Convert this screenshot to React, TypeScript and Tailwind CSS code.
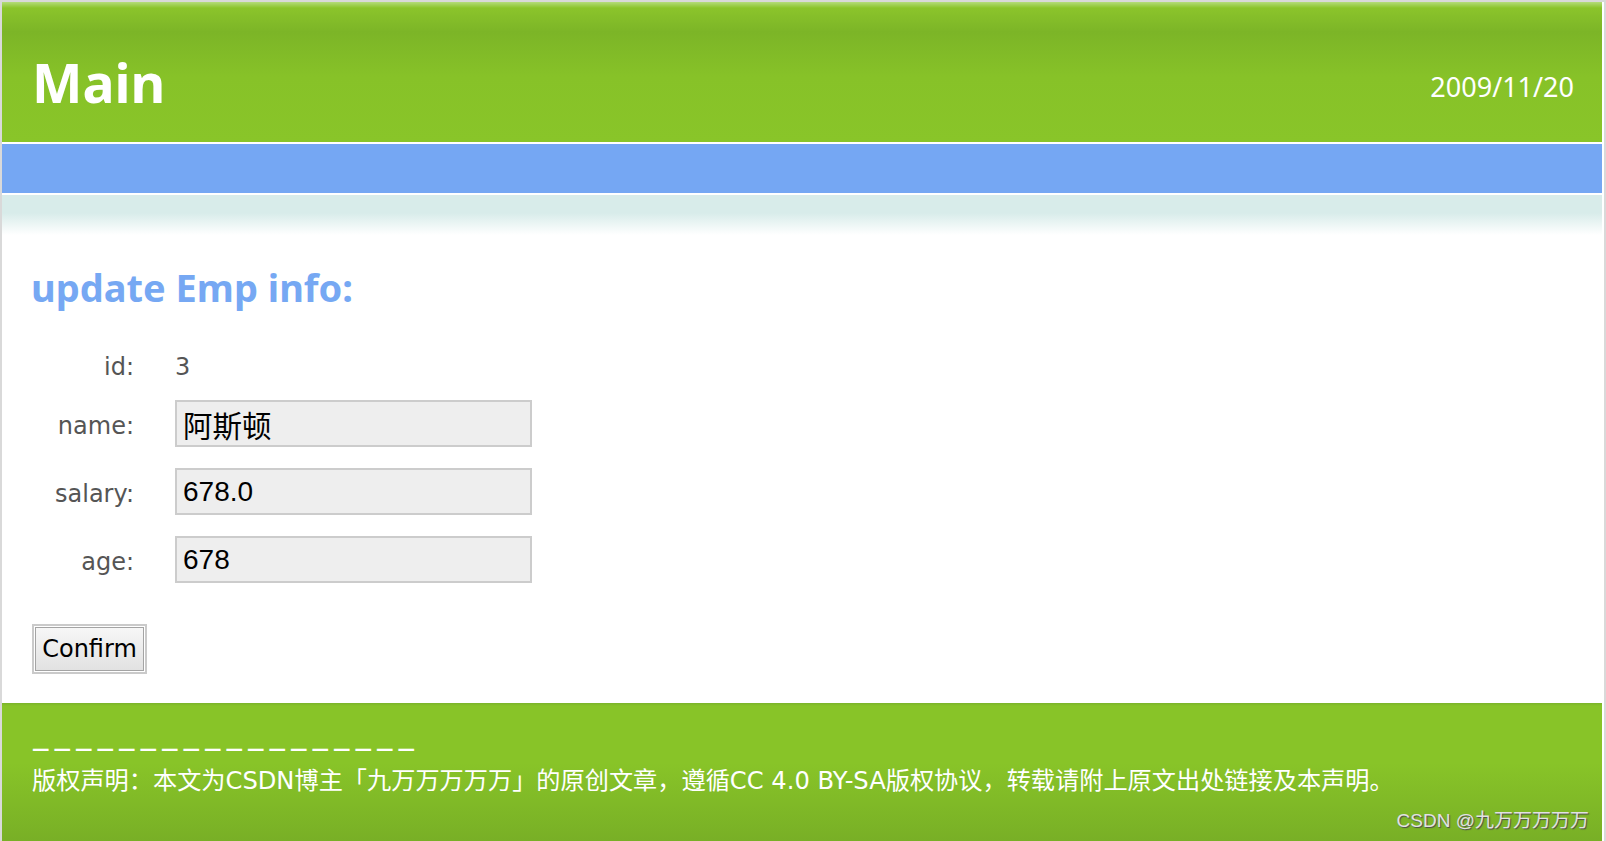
export default function App() {
  const rows = [
    { label: 'name:', value: '阿斯顿', size: 'text-[29.5px]' },
    { label: 'salary:', value: '678.0', size: 'text-[28px]' },
    { label: 'age:', value: '678', size: 'text-[28px]' },
  ];

  return (
    <div className="h-[841px] w-[1606px] overflow-hidden border-l-2 border-r-2 border-t-2 border-[#d9d9d9] bg-white pr-[2px]">
      <div className="flex w-[1600px] flex-col">
        {/* header */}
        <div className="flex h-[140px] items-start justify-between bg-[linear-gradient(to_bottom,#b4dc7a_0px,#8bc42b_6px,#7cb527_30px,#87c228_75px,#89c529_100%)] pl-[30px] pr-[28px]">
          <h1 className="mt-[54px] font-['Noto_Sans',sans-serif] text-[53.5px] font-bold leading-[53px] text-white">
            Main
          </h1>
          <span className="mt-[71px] font-['Noto_Sans',sans-serif] text-[27px] leading-[27px] text-white">
            2009/11/20
          </span>
        </div>
        <div className="h-[2px] bg-white" />
        <div className="h-[49px] bg-[#75a7f3]" />
        <div className="h-[2px] bg-white" />
        <div className="h-[40px] bg-[linear-gradient(to_bottom,#d8ecea_0px,#d8ecea_18px,#ffffff_40px)]" />

        {/* content */}
        <div className="flex flex-col pb-[29px] pl-[29px] pt-[30px]">
          <h2 className="font-['Noto_Sans',sans-serif] text-[38px] font-bold leading-[44px] text-[#76a8f3]">
            update Emp info:
          </h2>

          <div className="mt-[46px] grid w-fit grid-cols-[103px_auto] items-center gap-x-[41px] gap-y-[21px] font-['DejaVu_Sans',sans-serif] text-[24px] text-[#555555]">
            <span className="text-right leading-[24px]">id:</span>
            <span className="leading-[24px]">3</span>
            {rows.map((r) => (
              <div key={r.label} className="contents">
                <span className="pt-[4px] text-right leading-[24px]">{r.label}</span>
                <input
                  readOnly
                  value={r.value}
                  className={`h-[47px] w-[357px] border-2 border-[#cccccc] bg-[#eeeeee] px-[6px] font-['Liberation_Sans','Noto_Sans_CJK_SC',sans-serif] text-black outline-none ${r.size}`}
                />
              </div>
            ))}
          </div>

          <button className="ml-px mt-[41px] block h-[50px] w-[115px] border-2 border-[#cacaca] bg-white p-px">
            <span className="flex h-full w-full items-center justify-center border border-[#a4a4a4] bg-[linear-gradient(to_bottom,#f7f7f7,#e2e2e2)] font-['DejaVu_Sans',sans-serif] text-[24px] leading-none text-black">
              Confirm
            </span>
          </button>
        </div>

        {/* footer */}
        <div className="flex h-[200px] flex-col bg-[linear-gradient(to_bottom,#7bb32a_0px,#88c428_3px,#88c428_60px,#78af26_139px)] pl-[30px] pr-[13px] pt-[34px] text-white">
          <div className="font-['DejaVu_Sans',sans-serif] text-[17.5px] font-bold leading-[24px] tracking-[4px]">
            ——————————————————
          </div>
          <p className="mt-[4px] font-['DejaVu_Sans','Noto_Sans_CJK_SC',sans-serif] text-[24.2px] leading-[32px]">
            版权声明：本文为CSDN博主「九万万万万万」的原创文章，遵循CC 4.0 BY-SA版权协议，转载请附上原文出处链接及本声明。
          </p>
          <p className="mt-[12px] text-right font-['Liberation_Sans','Noto_Sans_CJK_SC',sans-serif] text-[19px] leading-[24px] text-[#e2e2e2] [text-shadow:1px_1px_1px_#4a4a4a]">
            CSDN @九万万万万万
          </p>
        </div>
      </div>
    </div>
  );
}
